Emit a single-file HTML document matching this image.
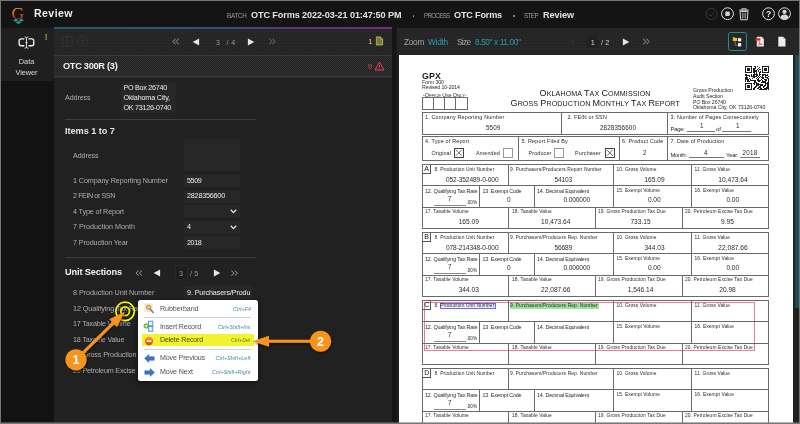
<!DOCTYPE html>
<html lang="en"><head><meta charset="utf-8"><title>Review</title>
<style>

html,body{margin:0;padding:0;background:#141414;}
body{width:800px;height:424px;overflow:hidden;font-family:"Liberation Sans",sans-serif;}
#app{position:relative;width:800px;height:424px;overflow:hidden;background:#141414;will-change:transform;}
#app div,#app span.t,#app svg{position:absolute;}
span.t{white-space:nowrap;line-height:12px;display:block;}
.grid{background-color:#242424;background-image:linear-gradient(rgba(255,255,255,.014) 1px,transparent 1px),linear-gradient(90deg,rgba(255,255,255,.014) 1px,transparent 1px);background-size:3px 3px;}
.chk{background-color:#272727;background-image:repeating-conic-gradient(#323232 0 25%,#222 0 50%);background-size:2px 2px;}
.inp{background:#272727;border-radius:2px;}

</style></head>
<body>
<div id="app">
<div style="left:0px;top:0px;width:800px;height:28px;background:#141414;"></div>
<div style="left:0px;top:28px;width:54px;height:53px;background:#1f1f1f;"></div>
<div style="left:0px;top:81px;width:54px;height:343px;background:#121212;"></div>
<div class="grid" style="left:54px;top:28px;width:338px;height:27px;"></div>
<div style="left:54px;top:27px;width:338px;height:1.6px;background:linear-gradient(90deg,#1f5d68 0%,#2c5a76 30%,#3c4e7a 50%,#543a74 68%,#6e2f7a 100%);"></div>
<div class="chk" style="left:54px;top:55px;width:338px;height:23px;"></div>
<div style="left:54px;top:55px;width:338px;height:1px;background:#3a3a3a;"></div>
<div style="left:54px;top:76.3px;width:338px;height:1px;background:#3c3c3c;"></div>
<div style="left:54px;top:78px;width:338px;height:346px;background:#212121;"></div>
<div style="left:392px;top:27px;width:4.5px;height:397px;background:#151515;"></div>
<div class="grid" style="left:396.5px;top:28px;width:403.5px;height:27px;"></div>
<div style="left:396.5px;top:55px;width:403.5px;height:369px;background:#202020;"></div>
<div style="left:399px;top:55px;width:393.5px;height:369px;background:#fff;"></div>
<div style="left:794.5px;top:55px;width:4.5px;height:253px;background:#1d4b53;"></div>
<span class="t" style="left:34.00px;top:7.00px;font-size:10.6px;color:#efefef;font-weight:700;letter-spacing:0.412px;">Review</span>
<span class="t" style="left:227.00px;top:9.50px;font-size:6.3px;color:#9a9a9a;letter-spacing:-0.277px;">BATCH</span>
<span class="t" style="left:251.00px;top:9.00px;font-size:9.1px;color:#e2e2e2;font-weight:700;letter-spacing:-0.102px;">OTC Forms 2022-03-21 01:47:50 PM</span>
<div style="left:412.7px;top:15.2px;width:1.6px;height:1.6px;background:#999;border-radius:50%"></div>
<span class="t" style="left:424.00px;top:9.50px;font-size:6.3px;color:#9a9a9a;letter-spacing:-0.758px;">PROCESS</span>
<span class="t" style="left:454.00px;top:9.00px;font-size:9.1px;color:#e2e2e2;font-weight:700;letter-spacing:-0.172px;">OTC Forms</span>
<div style="left:513.2px;top:15.2px;width:1.6px;height:1.6px;background:#999;border-radius:50%"></div>
<span class="t" style="left:524.00px;top:9.50px;font-size:6.3px;color:#9a9a9a;letter-spacing:-0.614px;">STEP</span>
<span class="t" style="left:543.00px;top:9.00px;font-size:9.1px;color:#e2e2e2;font-weight:700;letter-spacing:-0.060px;">Review</span>
<svg style="left:10px;top:4px" width="18" height="22" viewBox="0 0 18 22">
<defs><linearGradient id="lg" gradientUnits="userSpaceOnUse" x1="0" y1="3" x2="0" y2="15"><stop offset="0.1" stop-color="#f5a01c"/><stop offset="0.9" stop-color="#d8281c"/></linearGradient></defs>
<text x="1.600" y="14.700" font-family="Liberation Serif,serif" font-size="17.600" fill="url(#lg)">G</text>
<path d="M3 16.200l2.700-1.500 2.700 1.500-2.700 1.500zM8.600 16.200l2.700-1.500 2.700 1.500-2.700 1.500zM5.700 18.500l2.800-1.500 2.800 1.500-2.800 1.500z" fill="#12a79a"/>
</svg>
<svg style="left:700px;top:4px" width="96" height="20" viewBox="0 0 96 20">
<circle cx="11.5" cy="10" r="5.6" fill="none" stroke="#3a3a3a" stroke-width="0.9"/>
<path d="M8.8 10.2l2 2 3.4-4.2" fill="none" stroke="#3a3a3a" stroke-width="1"/>
<circle cx="27.5" cy="9.7" r="5.9" fill="none" stroke="#e9e1dc" stroke-width="1"/>
<rect x="25.2" y="7.4" width="4.6" height="4.6" rx="1" fill="#cfd3dc"/>
<path d="M39.2 6.2h9.6M41.8 6v-1.2h4.4V6M40 7.4h8l-.7 8.4h-6.6z" fill="none" stroke="#d8d4d2" stroke-width="1"/>
<path d="M42.4 8.6v6M44 8.6v6M45.6 8.6v6" stroke="#b9a9a9" stroke-width="0.8"/>
<circle cx="68.5" cy="9.7" r="5.9" fill="none" stroke="#e9e1dc" stroke-width="1"/>
<text x="68.5" y="12.9" text-anchor="middle" font-family="Liberation Sans,sans-serif" font-weight="700" font-size="8.6" fill="#e8e8f0">?</text>
<circle cx="84.5" cy="9.7" r="5.9" fill="none" stroke="#e9e1dc" stroke-width="1"/>
<circle cx="84.5" cy="7.9" r="2.1" fill="#d6d6d6"/>
<path d="M80.3 13.6c.6-2.6 2.3-3.2 4.2-3.2s3.600.6 4.200 3.200c-1.100 1.400-2.600 2-4.200 2s-3.100-.6-4.200-2z" fill="#d6d6d6"/>
</svg>
<svg style="left:17px;top:34.800px" width="19.500" height="15.200" viewBox="0 0 22 17">
<path d="M8.3 4.300H4.600c-1.300 0-2.200.9-2.200 2.200v3.400c0 1.300.9 2.200 2.200 2.200h3.700M13 4.300h3.700c1.300 0 2.200.9 2.200 2.200v3.400c0 1.300-.9 2.200-2.200 2.200H13" fill="none" stroke="#f2f2f2" stroke-width="1.5"/>
<path d="M8.600 2.100c1.200 0 1.900.5 2.100 1.100.2-.6.900-1.100 2.100-1.100M8.600 14.900c1.200 0 1.900-.5 2.100-1.100.2.600.9 1.100 2.100 1.100M10.700 3.200v10.600M9.500 8.500h2.400" fill="none" stroke="#f2f2f2" stroke-width="1"/>
</svg>
<span class="t" style="left:44.80px;top:31.00px;font-size:8.4px;color:#a9a61c;font-weight:700;">!</span>
<span class="t" style="left:18.75px;top:55.50px;font-size:7.4px;color:#d8d8d8;letter-spacing:-0.033px;">Data</span>
<span class="t" style="left:15.50px;top:66.50px;font-size:7.4px;color:#d8d8d8;letter-spacing:-0.081px;">Viewer</span>
<svg style="left:60px;top:34px" width="32" height="14" viewBox="0 0 32 14">
<rect x="2.500" y="2.500" width="9.500" height="9.500" fill="none" stroke="#323232" stroke-width="1"/>
<path d="M7.200 2.500v6M5 6.500l2.200 2.400 2.200-2.400" fill="none" stroke="#323232" stroke-width="1"/>
<circle cx="22.500" cy="7.200" r="5" fill="none" stroke="#323232" stroke-width="1"/>
<path d="M20.500 5.200l4 4M24.500 5.200l-4 4" stroke="#323232" stroke-width="1"/>
</svg>
<svg style="left:171.5px;top:38px" width="8" height="7" viewBox="0 0 9 8" preserveAspectRatio="none"><path d="M4 .8L1 4l3 3.200M7.600.8L4.600 4l3 3.200" fill="none" stroke="#bdbdbd" stroke-width="0.9"/></svg>
<svg style="left:192px;top:37.5px" width="8" height="8" viewBox="0 0 8 8"><path d="M7.100.600v6.800L.700 4z" fill="#e6e6e6"/></svg>
<span class="t" style="left:216.00px;top:36.50px;font-size:7.2px;color:#9a9a9a;">3</span>
<span class="t" style="left:226.50px;top:36.50px;font-size:7.2px;color:#9a9a9a;letter-spacing:0.332px;">/ 4</span>
<svg style="left:247px;top:37.5px" width="8" height="8" viewBox="0 0 8 8"><path d="M.900.600v6.800L7.300 4z" fill="#e6e6e6"/></svg>
<svg style="left:267.5px;top:38px" width="8" height="7" viewBox="0 0 9 8" preserveAspectRatio="none"><path d="M1.400.8L4.400 4l-3 3.200M5 .8L8 4 5 7.200" fill="none" stroke="#8f8f8f" stroke-width="0.9"/></svg>
<span class="t" style="left:368.30px;top:35.50px;font-size:8px;color:#e6c86e;">1</span>
<svg style="left:375.300px;top:36.300px" width="9" height="9.900" viewBox="0 0 10 11">
<path d="M1.500 1h4.600l2.400 2.400v6.600h-7z" fill="#7a7832" stroke="#c3bd72" stroke-width="0.9"/>
<path d="M6 1v2.600h2.500" fill="#5d5b26" stroke="#c3bd72" stroke-width="0.700"/>
</svg>
<span class="t" style="left:63.00px;top:60.00px;font-size:9.2px;color:#f0f0f0;font-weight:700;letter-spacing:-0.272px;">OTC 300R (3)</span>
<span class="t" style="left:367.80px;top:60.50px;font-size:8px;color:#dd3f5e;">9</span>
<svg style="left:374px;top:61px" width="11" height="10" viewBox="0 0 11 10">
<path d="M5.500 1L10 9H1z" fill="none" stroke="#e2405f" stroke-width="1"/>
<path d="M5.500 3.800v2.800M5.500 7.300v.9" stroke="#e2405f" stroke-width="0.9"/>
</svg>
<span class="t" style="left:65.00px;top:91.50px;font-size:7.2px;color:#aeaeae;letter-spacing:-0.130px;">Address</span>
<div class="inp" style="left:121px;top:82px;width:55px;height:31px;"></div>
<span class="t" style="left:123.50px;top:81.50px;font-size:7.2px;color:#ececec;letter-spacing:-0.278px;">PO Box 26740</span>
<span class="t" style="left:123.50px;top:91.50px;font-size:7.2px;color:#ececec;letter-spacing:-0.156px;">Oklahoma City,</span>
<span class="t" style="left:123.50px;top:101.50px;font-size:7.2px;color:#ececec;letter-spacing:-0.257px;">OK 73126-0740</span>
<div style="left:65px;top:119px;width:190.5px;height:1px;background:#3e3e3e;"></div>
<span class="t" style="left:65.00px;top:125.00px;font-size:9.2px;color:#e4e4e4;font-weight:700;letter-spacing:-0.052px;">Items 1 to 7</span>
<span class="t" style="left:73.00px;top:149.50px;font-size:7.2px;color:#aeaeae;letter-spacing:-0.130px;">Address</span>
<div class="inp" style="left:184px;top:139px;width:56px;height:32px;"></div>
<span class="t" style="left:73.00px;top:174.50px;font-size:7.2px;color:#aeaeae;letter-spacing:-0.102px;">1 Company Reporting Number</span>
<div class="inp" style="left:184px;top:174.0px;width:56px;height:13px;"></div>
<span class="t" style="left:187.00px;top:174.50px;font-size:7.2px;color:#ececec;letter-spacing:-0.379px;">5509</span>
<span class="t" style="left:73.00px;top:189.50px;font-size:7.2px;color:#aeaeae;letter-spacing:-0.432px;">2 FEIN or SSN</span>
<div class="inp" style="left:184px;top:189.5px;width:56px;height:13px;"></div>
<span class="t" style="left:187.00px;top:189.50px;font-size:7.2px;color:#ececec;letter-spacing:-0.204px;">2828356600</span>
<span class="t" style="left:73.00px;top:205.50px;font-size:7.2px;color:#aeaeae;letter-spacing:-0.131px;">4 Type of Report</span>
<div class="inp" style="left:184px;top:205.0px;width:56px;height:13px;"></div>
<span class="t" style="left:73.00px;top:220.50px;font-size:7.2px;color:#aeaeae;letter-spacing:-0.024px;">7 Production Month</span>
<div class="inp" style="left:184px;top:220.5px;width:56px;height:13px;"></div>
<span class="t" style="left:187.00px;top:220.50px;font-size:7.2px;color:#ececec;">4</span>
<span class="t" style="left:73.00px;top:236.50px;font-size:7.2px;color:#aeaeae;letter-spacing:-0.109px;">7 Production Year</span>
<div class="inp" style="left:184px;top:236.0px;width:56px;height:13px;"></div>
<span class="t" style="left:187.00px;top:236.50px;font-size:7.2px;color:#ececec;letter-spacing:-0.379px;">2018</span>
<svg style="left:230.2px;top:209.2px" width="7" height="5" viewBox="0 0 7 5"><path d="M.8.800l2.700 2.800L6.200.8" fill="none" stroke="#e8e8e8" stroke-width="1.300"/></svg>
<svg style="left:230.2px;top:224.7px" width="7" height="5" viewBox="0 0 7 5"><path d="M.8.800l2.700 2.800L6.200.8" fill="none" stroke="#e8e8e8" stroke-width="1.300"/></svg>
<div style="left:65px;top:257px;width:190.5px;height:1px;background:#3e3e3e;"></div>
<span class="t" style="left:65.00px;top:266.00px;font-size:9.2px;color:#f0f0f0;font-weight:700;letter-spacing:-0.137px;">Unit Sections</span>
<svg style="left:134.5px;top:269.7px" width="8.5" height="6.3" viewBox="0 0 9 8" preserveAspectRatio="none"><path d="M4 .8L1 4l3 3.200M7.600.8L4.600 4l3 3.200" fill="none" stroke="#bdbdbd" stroke-width="0.9"/></svg>
<svg style="left:153px;top:269px" width="8" height="8" viewBox="0 0 8 8"><path d="M7.100.600v6.800L.700 4z" fill="#e6e6e6"/></svg>
<div style="left:175px;top:265px;width:12.5px;height:15px;background:#1d1d1d;border:1px solid #292929;border-radius:2px;box-sizing:border-box"></div>
<span class="t" style="left:179.00px;top:267.50px;font-size:7.2px;color:#9a9a9a;">3</span>
<span class="t" style="left:190.00px;top:267.50px;font-size:7.2px;color:#9a9a9a;letter-spacing:0.165px;">/ 5</span>
<svg style="left:213px;top:269px" width="8" height="8" viewBox="0 0 8 8"><path d="M.900.600v6.800L7.300 4z" fill="#e6e6e6"/></svg>
<svg style="left:229.5px;top:269.7px" width="8.5" height="6.3" viewBox="0 0 9 8" preserveAspectRatio="none"><path d="M1.400.8L4.400 4l-3 3.200M5 .8L8 4 5 7.200" fill="none" stroke="#bdbdbd" stroke-width="0.9"/></svg>
<span class="t" style="left:73.00px;top:286.50px;font-size:7.2px;color:#aeaeae;letter-spacing:-0.056px;">8 Production Unit Number</span>
<span class="t" style="left:73.00px;top:302.50px;font-size:7.2px;color:#aeaeae;letter-spacing:-0.060px;">12 Qualifying Tax Rate</span>
<span class="t" style="left:73.00px;top:317.50px;font-size:7.2px;color:#aeaeae;letter-spacing:-0.183px;">17 Taxable Volume</span>
<span class="t" style="left:73.00px;top:333.50px;font-size:7.2px;color:#aeaeae;letter-spacing:-0.205px;">18 Taxable Value</span>
<span class="t" style="left:73.00px;top:348.50px;font-size:7.2px;color:#aeaeae;letter-spacing:-0.112px;">19 Gross Production</span>
<span class="t" style="left:73.00px;top:364.50px;font-size:7.2px;color:#aeaeae;letter-spacing:-0.186px;">20 Petroleum Excise</span>
<div class="inp" style="left:184px;top:286px;width:69px;height:13px;"></div>
<span class="t" style="left:187.00px;top:286.50px;font-size:7.2px;color:#ececec;letter-spacing:-0.112px;">9. Purchasers/Produ</span>
<span class="t" style="left:404.00px;top:36.00px;font-size:8.3px;color:#a8a8a8;letter-spacing:-0.304px;">Zoom</span>
<span class="t" style="left:428.00px;top:36.00px;font-size:8.3px;color:#2c9bb3;letter-spacing:-0.243px;">Width</span>
<span class="t" style="left:457.00px;top:36.00px;font-size:8.3px;color:#a8a8a8;letter-spacing:-0.662px;">Size</span>
<span class="t" style="left:475.00px;top:36.00px;font-size:8.3px;color:#2c9bb3;letter-spacing:-0.390px;">8.50&quot; x 11.00&quot;</span>
<svg style="left:568px;top:37.5px" width="8" height="8" viewBox="0 0 8 8"><path d="M7.100.600v6.800L.700 4z" fill="#2c2c2c"/></svg>
<div style="left:586px;top:33.5px;width:12.5px;height:15px;background:#212121;border:1px solid #262626;border-radius:2px;box-sizing:border-box"></div>
<span class="t" style="left:590.80px;top:36.50px;font-size:7.4px;color:#d0d0d0;">1</span>
<span class="t" style="left:601.00px;top:36.50px;font-size:7.4px;color:#d0d0d0;letter-spacing:0.091px;">/ 2</span>
<svg style="left:622px;top:37.5px" width="8" height="8" viewBox="0 0 8 8"><path d="M.900.600v6.800L7.300 4z" fill="#e6e6e6"/></svg>
<svg style="left:641.5px;top:38px" width="8" height="7" viewBox="0 0 9 8" preserveAspectRatio="none"><path d="M1.400.8L4.400 4l-3 3.200M5 .8L8 4 5 7.200" fill="none" stroke="#bdbdbd" stroke-width="0.9"/></svg>
<div style="left:728px;top:32px;width:18.5px;height:18.5px;border:1px solid #1f8d92;border-radius:2.500px;box-sizing:border-box"></div>
<svg style="left:731px;top:35px" width="13" height="13" viewBox="0 0 13 13">
<path d="M1.800 2.300h1.800l.6.700h2v3H1.800z" fill="#f0b93a"/>
<path d="M4.200 6v4.200h2.600M4.200 7.300" fill="none" stroke="#9a9a9a" stroke-width="0.700"/>
<rect x="7" y="3.200" width="3.200" height="3.200" fill="#f4f4f4"/>
<rect x="7" y="8" width="3.200" height="3.400" fill="#f4f4f4"/>
</svg>
<svg style="left:754px;top:35px" width="12" height="13" viewBox="0 0 12 13">
<path d="M2.800 1.800h4.800l2.200 2.200v7.400h-7z" fill="#f6f6f6"/>
<path d="M7.600 1.800v2.200h2.200z" fill="#cfcfcf"/>
<rect x="1.200" y="3.300" width="5.200" height="2.300" fill="#e3211c"/>
<path d="M4.400 10.300c1.200-1.600 1.600-3.200 1.500-3.800-.2-.8-.9.200-.1 1.600.8 1.300 2.200 1.700 2.600 1.300.4-.5-1.500-.7-4 .9z" fill="none" stroke="#e3211c" stroke-width="0.600"/>
</svg>
<svg style="left:776px;top:35px" width="12" height="13" viewBox="0 0 12 13">
<path d="M2.300 1.800h4.800l2.400 2.400v7.200h-7.200z" fill="#ededed"/>
<path d="M7.100 1.800v2.400h2.400z" fill="#bdbdbd"/>
</svg>
<span class="t" style="left:422.00px;top:70.00px;font-size:8.8px;color:#1a1a1a;font-weight:700;letter-spacing:0.139px;">GPX</span>
<span class="t" style="left:422.00px;top:76.00px;font-size:5.2px;color:#2a2a2a;letter-spacing:-0.032px;">Form 300</span>
<span class="t" style="left:422.00px;top:81.00px;font-size:5.2px;color:#2a2a2a;letter-spacing:-0.088px;">Revised 10-2014</span>
<span class="t" style="left:423.00px;top:89.00px;font-size:5.4px;color:#2a2a2a;letter-spacing:-0.058px"><span style="font-size:5.4px">-O</span><span style="font-size:4.3px">FFICE </span><span style="font-size:5.4px">U</span><span style="font-size:4.3px">SE </span><span style="font-size:5.4px">O</span><span style="font-size:4.3px">NLY</span><span style="font-size:5.4px">-</span></span>
<div style="left:421.50px;top:97.00px;width:44.00px;height:10.50px;border:1px solid #6a6a6a;"></div>
<div style="left:432.75px;top:97.5px;width:1px;height:11.5px;background:#6a6a6a;"></div>
<div style="left:444.0px;top:97.5px;width:1px;height:11.5px;background:#6a6a6a;"></div>
<div style="left:455.25px;top:97.5px;width:1px;height:11.5px;background:#6a6a6a;"></div>
<span class="t" style="left:539.50px;top:87.00px;font-size:9px;color:#161616;letter-spacing:0.128px"><span style="font-size:9px">O</span><span style="font-size:7.1px">KLAHOMA</span><span style="font-size:7.1px"> </span><span style="font-size:9px">T</span><span style="font-size:7.1px">AX</span><span style="font-size:7.1px"> </span><span style="font-size:9px">C</span><span style="font-size:7.1px">OMMISSION</span></span>
<span class="t" style="left:510.50px;top:97.00px;font-size:9px;color:#161616;letter-spacing:0.112px"><span style="font-size:9px">G</span><span style="font-size:7.1px">ROSS</span><span style="font-size:7.1px"> </span><span style="font-size:9px">P</span><span style="font-size:7.1px">RODUCTION</span><span style="font-size:7.1px"> </span><span style="font-size:9px">M</span><span style="font-size:7.1px">ONTHLY</span><span style="font-size:7.1px"> </span><span style="font-size:9px">T</span><span style="font-size:7.1px">AX</span><span style="font-size:7.1px"> </span><span style="font-size:9px">R</span><span style="font-size:7.1px">EPORT</span></span>
<span class="t" style="left:693.00px;top:84.00px;font-size:5.2px;color:#2a2a2a;letter-spacing:-0.011px;">Gross Production</span>
<span class="t" style="left:693.00px;top:90.00px;font-size:5.2px;color:#2a2a2a;letter-spacing:-0.049px;">Audit Section</span>
<span class="t" style="left:693.00px;top:96.00px;font-size:5.2px;color:#2a2a2a;letter-spacing:-0.069px;">PO Box 26740</span>
<span class="t" style="left:693.00px;top:101.00px;font-size:5.2px;color:#2a2a2a;letter-spacing:-0.029px;">Oklahoma City, OK 73126-0740</span>
<svg style="left:745px;top:66px" width="23.500" height="24" viewBox="0 0 25 25" preserveAspectRatio="none" shape-rendering="crispEdges"><path d="M0 0h7v1h-7zM10 0h2v1h-2zM13 0h1v1h-1zM18 0h7v1h-7zM0 1h1v1h-1zM6 1h1v1h-1zM11 1h1v1h-1zM15 1h1v1h-1zM18 1h1v1h-1zM24 1h1v1h-1zM0 2h1v1h-1zM2 2h3v1h-3zM6 2h1v1h-1zM9 2h3v1h-3zM14 2h1v1h-1zM18 2h1v1h-1zM20 2h3v1h-3zM24 2h1v1h-1zM0 3h1v1h-1zM2 3h3v1h-3zM6 3h1v1h-1zM8 3h3v1h-3zM13 3h1v1h-1zM15 3h2v1h-2zM18 3h1v1h-1zM20 3h3v1h-3zM24 3h1v1h-1zM0 4h1v1h-1zM2 4h3v1h-3zM6 4h1v1h-1zM8 4h5v1h-5zM14 4h1v1h-1zM18 4h1v1h-1zM20 4h3v1h-3zM24 4h1v1h-1zM0 5h1v1h-1zM6 5h1v1h-1zM9 5h4v1h-4zM14 5h1v1h-1zM16 5h1v1h-1zM18 5h1v1h-1zM24 5h1v1h-1zM0 6h7v1h-7zM8 6h3v1h-3zM12 6h1v1h-1zM15 6h2v1h-2zM18 6h7v1h-7zM8 7h1v1h-1zM10 7h1v1h-1zM12 7h1v1h-1zM15 7h1v1h-1zM0 8h2v1h-2zM6 8h1v1h-1zM8 8h6v1h-6zM15 8h2v1h-2zM18 8h4v1h-4zM23 8h1v1h-1zM0 9h5v1h-5zM6 9h1v1h-1zM8 9h3v1h-3zM12 9h2v1h-2zM15 9h1v1h-1zM18 9h2v1h-2zM21 9h3v1h-3zM1 10h1v1h-1zM4 10h1v1h-1zM6 10h7v1h-7zM14 10h1v1h-1zM16 10h1v1h-1zM18 10h1v1h-1zM21 10h1v1h-1zM24 10h1v1h-1zM0 11h3v1h-3zM9 11h2v1h-2zM13 11h1v1h-1zM15 11h1v1h-1zM17 11h3v1h-3zM21 11h3v1h-3zM3 12h3v1h-3zM8 12h1v1h-1zM10 12h1v1h-1zM15 12h1v1h-1zM19 12h6v1h-6zM0 13h3v1h-3zM4 13h1v1h-1zM7 13h2v1h-2zM12 13h1v1h-1zM14 13h1v1h-1zM18 13h2v1h-2zM23 13h2v1h-2zM0 14h4v1h-4zM5 14h1v1h-1zM8 14h1v1h-1zM13 14h2v1h-2zM17 14h1v1h-1zM20 14h3v1h-3zM24 14h1v1h-1zM0 15h1v1h-1zM2 15h2v1h-2zM5 15h3v1h-3zM9 15h3v1h-3zM13 15h4v1h-4zM18 15h1v1h-1zM21 15h2v1h-2zM24 15h1v1h-1zM0 16h1v1h-1zM2 16h3v1h-3zM8 16h1v1h-1zM10 16h2v1h-2zM14 16h2v1h-2zM18 16h4v1h-4zM24 16h1v1h-1zM8 17h1v1h-1zM10 17h3v1h-3zM17 17h5v1h-5zM23 17h2v1h-2zM0 18h7v1h-7zM9 18h2v1h-2zM12 18h3v1h-3zM21 18h4v1h-4zM0 19h1v1h-1zM6 19h1v1h-1zM10 19h1v1h-1zM12 19h7v1h-7zM21 19h1v1h-1zM23 19h2v1h-2zM0 20h1v1h-1zM2 20h3v1h-3zM6 20h1v1h-1zM12 20h3v1h-3zM16 20h3v1h-3zM20 20h2v1h-2zM23 20h2v1h-2zM0 21h1v1h-1zM2 21h3v1h-3zM6 21h1v1h-1zM11 21h2v1h-2zM15 21h2v1h-2zM19 21h2v1h-2zM23 21h2v1h-2zM0 22h1v1h-1zM2 22h3v1h-3zM6 22h1v1h-1zM8 22h1v1h-1zM10 22h2v1h-2zM14 22h3v1h-3zM19 22h1v1h-1zM22 22h3v1h-3zM0 23h1v1h-1zM6 23h1v1h-1zM8 23h3v1h-3zM13 23h2v1h-2zM16 23h2v1h-2zM20 23h5v1h-5zM0 24h7v1h-7zM8 24h3v1h-3zM15 24h8v1h-8zM24 24h1v1h-1z" fill="#1c1c1c"/></svg>
<div style="left:421.50px;top:112.00px;width:345.50px;height:20.50px;border:1px solid #6a6a6a;"></div>
<div style="left:561.0px;top:112.5px;width:1px;height:21.5px;background:#6a6a6a;"></div>
<div style="left:666.5px;top:112.5px;width:1px;height:21.5px;background:#6a6a6a;"></div>
<span class="t" style="left:425.00px;top:111.00px;font-size:5.4px;color:#2a2a2a;letter-spacing:0.176px;">1. Company Reporting Number</span>
<span class="t" style="left:486.00px;top:121.50px;font-size:6.3px;color:#2a2a2a;letter-spacing:0.121px;">5509</span>
<span class="t" style="left:567.50px;top:111.00px;font-size:5.4px;color:#2a2a2a;letter-spacing:0.164px;">2. FEIN or SSN</span>
<span class="t" style="left:600.00px;top:121.50px;font-size:6.3px;color:#2a2a2a;letter-spacing:0.096px;">2828356600</span>
<span class="t" style="left:670.50px;top:111.00px;font-size:5.4px;color:#2a2a2a;letter-spacing:0.167px;">3. Number of Pages Consecutively</span>
<span class="t" style="left:670.50px;top:123.00px;font-size:6px;color:#2a2a2a;letter-spacing:-0.336px;">Page:</span>
<div style="left:686.5px;top:131.1px;width:28.0px;height:0.8px;background:#777;"></div>
<span class="t" style="left:700.00px;top:119.50px;font-size:6.3px;color:#2a2a2a;">1</span>
<span class="t" style="left:716.00px;top:123.00px;font-size:6px;color:#2a2a2a;">of</span>
<div style="left:722px;top:131.1px;width:28.5px;height:0.8px;background:#777;"></div>
<span class="t" style="left:736.00px;top:119.50px;font-size:6.3px;color:#2a2a2a;">1</span>
<div style="left:421.50px;top:136.00px;width:345.50px;height:23.00px;border:1px solid #6a6a6a;"></div>
<div style="left:518.0px;top:136.5px;width:1px;height:24.0px;background:#6a6a6a;"></div>
<div style="left:618.5px;top:136.5px;width:1px;height:24.0px;background:#6a6a6a;"></div>
<div style="left:666.5px;top:136.5px;width:1px;height:24.0px;background:#6a6a6a;"></div>
<span class="t" style="left:425.00px;top:135.00px;font-size:5.4px;color:#2a2a2a;letter-spacing:0.187px;">4. Type of Report</span>
<span class="t" style="left:431.50px;top:147.00px;font-size:5.4px;color:#2a2a2a;letter-spacing:0.112px;">Original</span>
<div style="left:454.00px;top:148.00px;width:7.50px;height:7.50px;border:1px solid #444;"></div>
<svg style="left:455px;top:149px" width="8" height="8" viewBox="0 0 8 8"><path d="M.8.800l6 6M6.800.8l-6 6" stroke="#444" stroke-width="0.800"/></svg>
<span class="t" style="left:476.00px;top:147.00px;font-size:5.4px;color:#2a2a2a;letter-spacing:0.126px;">Amended</span>
<div style="left:503.00px;top:148.00px;width:8.00px;height:7.50px;border:1px solid #999;"></div>
<span class="t" style="left:521.50px;top:135.00px;font-size:5.4px;color:#2a2a2a;letter-spacing:0.182px;">5. Report Filed By</span>
<span class="t" style="left:528.50px;top:147.00px;font-size:5.4px;color:#2a2a2a;letter-spacing:0.136px;">Producer</span>
<div style="left:554.00px;top:148.00px;width:7.50px;height:7.50px;border:1px solid #999;"></div>
<span class="t" style="left:575.00px;top:147.00px;font-size:5.4px;color:#2a2a2a;letter-spacing:0.154px;">Purchaser</span>
<div style="left:605.00px;top:148.00px;width:7.50px;height:7.50px;border:1px solid #444;"></div>
<svg style="left:606px;top:149px" width="8" height="8" viewBox="0 0 8 8"><path d="M.8.800l6 6M6.800.8l-6 6" stroke="#444" stroke-width="0.800"/></svg>
<span class="t" style="left:622.00px;top:135.00px;font-size:5.4px;color:#2a2a2a;letter-spacing:0.165px;">6. Product Code</span>
<span class="t" style="left:643.00px;top:146.50px;font-size:6.3px;color:#2a2a2a;">2</span>
<span class="t" style="left:670.50px;top:135.00px;font-size:5.4px;color:#2a2a2a;letter-spacing:0.156px;">7. Date of Production</span>
<span class="t" style="left:670.50px;top:149.00px;font-size:6px;color:#2a2a2a;letter-spacing:-0.390px;">Month:</span>
<div style="left:688.5px;top:157.4px;width:35.5px;height:0.8px;background:#777;"></div>
<span class="t" style="left:704.00px;top:146.50px;font-size:6.3px;color:#2a2a2a;">4</span>
<span class="t" style="left:726.00px;top:149.00px;font-size:6px;color:#2a2a2a;letter-spacing:-0.258px;">Year:</span>
<div style="left:740px;top:157.4px;width:19.5px;height:0.8px;background:#777;"></div>
<span class="t" style="left:742.50px;top:146.50px;font-size:6.3px;color:#2a2a2a;letter-spacing:0.246px;">2018</span>
<div style="left:509.5px;top:302.6px;width:89px;height:6.4px;background:#9be29b;"></div>
<div style="left:440px;top:302.6px;width:56px;height:6.4px;background:#f1f1ff;border:1px solid rgba(70,70,235,.8);box-sizing:border-box"></div>
<div style="left:423.50px;top:302.00px;width:329.00px;height:46.50px;border:1px solid #e87b9c;"></div>
<div style="left:422.00px;top:164.00px;width:345.00px;height:63.00px;border:1px solid #6a6a6a;"></div>
<div style="left:422.5px;top:185.0px;width:346.0px;height:1px;background:#6a6a6a;"></div>
<div style="left:422.5px;top:206.5px;width:346.0px;height:1px;background:#6a6a6a;"></div>
<div style="left:430.0px;top:164.5px;width:1px;height:8.5px;background:#555;"></div>
<div style="left:422.5px;top:172.5px;width:8.0px;height:1px;background:#555;"></div>
<span class="t" style="left:424.37px;top:162.50px;font-size:7px;color:#111;">A</span>
<div style="left:508.0px;top:164.5px;width:1px;height:21.0px;background:#6a6a6a;"></div>
<div style="left:613.0px;top:164.5px;width:1px;height:21.0px;background:#6a6a6a;"></div>
<div style="left:691.0px;top:164.5px;width:1px;height:21.0px;background:#6a6a6a;"></div>
<div style="left:479.0px;top:185.5px;width:1px;height:21.5px;background:#6a6a6a;"></div>
<div style="left:534.0px;top:185.5px;width:1px;height:21.5px;background:#6a6a6a;"></div>
<div style="left:613.0px;top:185.5px;width:1px;height:21.5px;background:#6a6a6a;"></div>
<div style="left:691.0px;top:185.5px;width:1px;height:21.5px;background:#6a6a6a;"></div>
<div style="left:508.0px;top:207.0px;width:1px;height:21.5px;background:#6a6a6a;"></div>
<div style="left:595.0px;top:207.0px;width:1px;height:21.5px;background:#6a6a6a;"></div>
<div style="left:682.0px;top:207.0px;width:1px;height:21.5px;background:#6a6a6a;"></div>
<span class="t" style="left:434.50px;top:163.50px;font-size:4.9px;color:#2a2a2a;letter-spacing:0.090px;">8. Production Unit Number</span>
<span class="t" style="left:510.00px;top:163.50px;font-size:4.9px;color:#2a2a2a;letter-spacing:0.087px;">9. Purchasers/Producers Report Number</span>
<span class="t" style="left:616.50px;top:163.50px;font-size:4.9px;color:#2a2a2a;letter-spacing:0.066px;">10. Gross Volume</span>
<span class="t" style="left:694.50px;top:163.50px;font-size:4.9px;color:#2a2a2a;letter-spacing:0.073px;">11. Gross Value</span>
<span class="t" style="left:425.00px;top:185.00px;font-size:5.4px;color:#2a2a2a;letter-spacing:-0.141px;">12. Qualifying Tax Rate</span>
<span class="t" style="left:482.50px;top:185.00px;font-size:5.4px;color:#2a2a2a;letter-spacing:-0.182px;">13. Exempt Code</span>
<span class="t" style="left:537.00px;top:185.00px;font-size:5.4px;color:#2a2a2a;letter-spacing:-0.147px;">14. Decimal Equivalent</span>
<span class="t" style="left:616.50px;top:184.50px;font-size:4.9px;color:#2a2a2a;letter-spacing:0.059px;">15. Exempt Volume</span>
<span class="t" style="left:694.50px;top:184.50px;font-size:4.9px;color:#2a2a2a;letter-spacing:0.074px;">16. Exempt Value</span>
<span class="t" style="left:448.00px;top:192.50px;font-size:6.3px;color:#2a2a2a;">7</span>
<div style="left:434px;top:204.6px;width:32px;height:0.8px;background:#8a8a8a;"></div>
<span class="t" style="left:466.50px;top:196.50px;font-size:4.6px;color:#2a2a2a;">.00%</span>
<span class="t" style="left:425.00px;top:205.50px;font-size:4.9px;color:#2a2a2a;letter-spacing:0.073px;">17. Taxable Volume</span>
<span class="t" style="left:512.00px;top:205.50px;font-size:4.9px;color:#2a2a2a;letter-spacing:0.088px;">18. Taxable Value</span>
<span class="t" style="left:598.00px;top:205.50px;font-size:4.9px;color:#2a2a2a;letter-spacing:0.097px;">19. Gross Production Tax Due</span>
<span class="t" style="left:685.00px;top:205.50px;font-size:4.9px;color:#2a2a2a;letter-spacing:0.088px;">20. Petroleum Excise Tax Due</span>
<span class="t" style="left:446.00px;top:173.50px;font-size:6.6px;color:#2a2a2a;letter-spacing:-0.113px;">052-352489-0-000</span>
<span class="t" style="left:554.50px;top:173.50px;font-size:6.6px;color:#2a2a2a;letter-spacing:-0.171px;">54103</span>
<span class="t" style="left:644.41px;top:173.50px;font-size:6.6px;color:#2a2a2a;">165.09</span>
<span class="t" style="left:718.32px;top:173.50px;font-size:6.6px;color:#2a2a2a;">10,473.64</span>
<span class="t" style="left:507.00px;top:193.50px;font-size:6.6px;color:#2a2a2a;">0</span>
<span class="t" style="left:563.50px;top:193.50px;font-size:6.6px;color:#2a2a2a;letter-spacing:-0.129px;">0.000000</span>
<span class="t" style="left:648.00px;top:193.50px;font-size:6.6px;color:#2a2a2a;letter-spacing:-0.086px;">0.00</span>
<span class="t" style="left:726.50px;top:193.50px;font-size:6.6px;color:#2a2a2a;letter-spacing:-0.086px;">0.00</span>
<span class="t" style="left:458.71px;top:215.50px;font-size:6.6px;color:#2a2a2a;">165.09</span>
<span class="t" style="left:541.12px;top:215.50px;font-size:6.6px;color:#2a2a2a;">10,473.64</span>
<span class="t" style="left:630.41px;top:215.50px;font-size:6.6px;color:#2a2a2a;">733.15</span>
<span class="t" style="left:721.08px;top:215.50px;font-size:6.6px;color:#2a2a2a;">9.95</span>
<div style="left:422.00px;top:232.00px;width:345.00px;height:63.00px;border:1px solid #6a6a6a;"></div>
<div style="left:422.5px;top:253.0px;width:346.0px;height:1px;background:#6a6a6a;"></div>
<div style="left:422.5px;top:274.5px;width:346.0px;height:1px;background:#6a6a6a;"></div>
<div style="left:430.0px;top:232.5px;width:1px;height:8.5px;background:#555;"></div>
<div style="left:422.5px;top:240.5px;width:8.0px;height:1px;background:#555;"></div>
<span class="t" style="left:424.37px;top:230.50px;font-size:7px;color:#111;">B</span>
<div style="left:508.0px;top:232.5px;width:1px;height:21.0px;background:#6a6a6a;"></div>
<div style="left:613.0px;top:232.5px;width:1px;height:21.0px;background:#6a6a6a;"></div>
<div style="left:691.0px;top:232.5px;width:1px;height:21.0px;background:#6a6a6a;"></div>
<div style="left:479.0px;top:253.5px;width:1px;height:21.5px;background:#6a6a6a;"></div>
<div style="left:534.0px;top:253.5px;width:1px;height:21.5px;background:#6a6a6a;"></div>
<div style="left:613.0px;top:253.5px;width:1px;height:21.5px;background:#6a6a6a;"></div>
<div style="left:691.0px;top:253.5px;width:1px;height:21.5px;background:#6a6a6a;"></div>
<div style="left:508.0px;top:275.0px;width:1px;height:21.5px;background:#6a6a6a;"></div>
<div style="left:595.0px;top:275.0px;width:1px;height:21.5px;background:#6a6a6a;"></div>
<div style="left:682.0px;top:275.0px;width:1px;height:21.5px;background:#6a6a6a;"></div>
<span class="t" style="left:434.50px;top:231.50px;font-size:4.9px;color:#2a2a2a;letter-spacing:0.090px;">8. Production Unit Number</span>
<span class="t" style="left:510.00px;top:231.50px;font-size:4.9px;color:#2a2a2a;letter-spacing:0.102px;">9. Purchasers/Producers Rep. Number</span>
<span class="t" style="left:616.50px;top:231.50px;font-size:4.9px;color:#2a2a2a;letter-spacing:0.066px;">10. Gross Volume</span>
<span class="t" style="left:694.50px;top:231.50px;font-size:4.9px;color:#2a2a2a;letter-spacing:0.073px;">11. Gross Value</span>
<span class="t" style="left:425.00px;top:253.00px;font-size:5.4px;color:#2a2a2a;letter-spacing:-0.141px;">12. Qualifying Tax Rate</span>
<span class="t" style="left:482.50px;top:253.00px;font-size:5.4px;color:#2a2a2a;letter-spacing:-0.182px;">13. Exempt Code</span>
<span class="t" style="left:537.00px;top:253.00px;font-size:5.4px;color:#2a2a2a;letter-spacing:-0.147px;">14. Decimal Equivalent</span>
<span class="t" style="left:616.50px;top:252.50px;font-size:4.9px;color:#2a2a2a;letter-spacing:0.059px;">15. Exempt Volume</span>
<span class="t" style="left:694.50px;top:252.50px;font-size:4.9px;color:#2a2a2a;letter-spacing:0.074px;">16. Exempt Value</span>
<span class="t" style="left:448.00px;top:260.50px;font-size:6.3px;color:#2a2a2a;">7</span>
<div style="left:434px;top:272.6px;width:32px;height:0.8px;background:#8a8a8a;"></div>
<span class="t" style="left:466.50px;top:264.50px;font-size:4.6px;color:#2a2a2a;">.00%</span>
<span class="t" style="left:425.00px;top:273.50px;font-size:4.9px;color:#2a2a2a;letter-spacing:0.073px;">17. Taxable Volume</span>
<span class="t" style="left:512.00px;top:273.50px;font-size:4.9px;color:#2a2a2a;letter-spacing:0.088px;">18. Taxable Value</span>
<span class="t" style="left:598.00px;top:273.50px;font-size:4.9px;color:#2a2a2a;letter-spacing:0.097px;">19. Gross Production Tax Due</span>
<span class="t" style="left:685.00px;top:273.50px;font-size:4.9px;color:#2a2a2a;letter-spacing:0.088px;">20. Petroleum Excise Tax Due</span>
<span class="t" style="left:446.00px;top:241.50px;font-size:6.6px;color:#2a2a2a;letter-spacing:-0.113px;">078-214348-0-000</span>
<span class="t" style="left:554.50px;top:241.50px;font-size:6.6px;color:#2a2a2a;letter-spacing:-0.171px;">56689</span>
<span class="t" style="left:644.41px;top:241.50px;font-size:6.6px;color:#2a2a2a;">344.03</span>
<span class="t" style="left:718.32px;top:241.50px;font-size:6.6px;color:#2a2a2a;">22,087.66</span>
<span class="t" style="left:507.00px;top:261.50px;font-size:6.6px;color:#2a2a2a;">0</span>
<span class="t" style="left:563.50px;top:261.50px;font-size:6.6px;color:#2a2a2a;letter-spacing:-0.129px;">0.000000</span>
<span class="t" style="left:648.00px;top:261.50px;font-size:6.6px;color:#2a2a2a;letter-spacing:-0.086px;">0.00</span>
<span class="t" style="left:726.50px;top:261.50px;font-size:6.6px;color:#2a2a2a;letter-spacing:-0.086px;">0.00</span>
<span class="t" style="left:458.71px;top:283.50px;font-size:6.6px;color:#2a2a2a;">344.03</span>
<span class="t" style="left:541.12px;top:283.50px;font-size:6.6px;color:#2a2a2a;">22,087.66</span>
<span class="t" style="left:627.65px;top:283.50px;font-size:6.6px;color:#2a2a2a;">1,546.14</span>
<span class="t" style="left:719.24px;top:283.50px;font-size:6.6px;color:#2a2a2a;">20.98</span>
<div style="left:422.00px;top:300.00px;width:345.00px;height:63.00px;border:1px solid #6a6a6a;"></div>
<div style="left:422.5px;top:321.0px;width:346.0px;height:1px;background:#6a6a6a;"></div>
<div style="left:422.5px;top:342.5px;width:346.0px;height:1px;background:#6a6a6a;"></div>
<div style="left:430.0px;top:300.5px;width:1px;height:8.5px;background:#555;"></div>
<div style="left:422.5px;top:308.5px;width:8.0px;height:1px;background:#555;"></div>
<span class="t" style="left:424.17px;top:298.50px;font-size:7px;color:#111;">C</span>
<div style="left:508.0px;top:300.5px;width:1px;height:21.0px;background:#6a6a6a;"></div>
<div style="left:613.0px;top:300.5px;width:1px;height:21.0px;background:#6a6a6a;"></div>
<div style="left:691.0px;top:300.5px;width:1px;height:21.0px;background:#6a6a6a;"></div>
<div style="left:479.0px;top:321.5px;width:1px;height:21.5px;background:#6a6a6a;"></div>
<div style="left:534.0px;top:321.5px;width:1px;height:21.5px;background:#6a6a6a;"></div>
<div style="left:613.0px;top:321.5px;width:1px;height:21.5px;background:#6a6a6a;"></div>
<div style="left:691.0px;top:321.5px;width:1px;height:21.5px;background:#6a6a6a;"></div>
<div style="left:508.0px;top:343.0px;width:1px;height:21.5px;background:#6a6a6a;"></div>
<div style="left:595.0px;top:343.0px;width:1px;height:21.5px;background:#6a6a6a;"></div>
<div style="left:682.0px;top:343.0px;width:1px;height:21.5px;background:#6a6a6a;"></div>
<span class="t" style="left:434.50px;top:299.50px;font-size:4.9px;color:#2a2a2a;letter-spacing:0.090px;">8. Production Unit Number</span>
<span class="t" style="left:510.00px;top:299.50px;font-size:4.9px;color:#2a2a2a;letter-spacing:0.102px;">9. Purchasers/Producers Rep. Number</span>
<span class="t" style="left:616.50px;top:299.50px;font-size:4.9px;color:#2a2a2a;letter-spacing:0.066px;">10. Gross Volume</span>
<span class="t" style="left:694.50px;top:299.50px;font-size:4.9px;color:#2a2a2a;letter-spacing:0.073px;">11. Gross Value</span>
<span class="t" style="left:425.00px;top:321.00px;font-size:5.4px;color:#2a2a2a;letter-spacing:-0.141px;">12. Qualifying Tax Rate</span>
<span class="t" style="left:482.50px;top:321.00px;font-size:5.4px;color:#2a2a2a;letter-spacing:-0.182px;">13. Exempt Code</span>
<span class="t" style="left:537.00px;top:321.00px;font-size:5.4px;color:#2a2a2a;letter-spacing:-0.147px;">14. Decimal Equivalent</span>
<span class="t" style="left:616.50px;top:320.50px;font-size:4.9px;color:#2a2a2a;letter-spacing:0.059px;">15. Exempt Volume</span>
<span class="t" style="left:694.50px;top:320.50px;font-size:4.9px;color:#2a2a2a;letter-spacing:0.074px;">16. Exempt Value</span>
<span class="t" style="left:448.00px;top:328.50px;font-size:6.3px;color:#2a2a2a;">7</span>
<div style="left:434px;top:340.6px;width:32px;height:0.8px;background:#8a8a8a;"></div>
<span class="t" style="left:466.50px;top:332.50px;font-size:4.6px;color:#2a2a2a;">.00%</span>
<span class="t" style="left:425.00px;top:341.50px;font-size:4.9px;color:#2a2a2a;letter-spacing:0.073px;">17. Taxable Volume</span>
<span class="t" style="left:512.00px;top:341.50px;font-size:4.9px;color:#2a2a2a;letter-spacing:0.088px;">18. Taxable Value</span>
<span class="t" style="left:598.00px;top:341.50px;font-size:4.9px;color:#2a2a2a;letter-spacing:0.097px;">19. Gross Production Tax Due</span>
<span class="t" style="left:685.00px;top:341.50px;font-size:4.9px;color:#2a2a2a;letter-spacing:0.088px;">20. Petroleum Excise Tax Due</span>
<div style="left:422.00px;top:368.00px;width:345.00px;height:63.00px;border:1px solid #6a6a6a;"></div>
<div style="left:422.5px;top:389.0px;width:346.0px;height:1px;background:#6a6a6a;"></div>
<div style="left:422.5px;top:410.5px;width:346.0px;height:1px;background:#6a6a6a;"></div>
<div style="left:430.0px;top:368.5px;width:1px;height:8.5px;background:#555;"></div>
<div style="left:422.5px;top:376.5px;width:8.0px;height:1px;background:#555;"></div>
<span class="t" style="left:424.17px;top:366.50px;font-size:7px;color:#111;">D</span>
<div style="left:508.0px;top:368.5px;width:1px;height:21.0px;background:#6a6a6a;"></div>
<div style="left:613.0px;top:368.5px;width:1px;height:21.0px;background:#6a6a6a;"></div>
<div style="left:691.0px;top:368.5px;width:1px;height:21.0px;background:#6a6a6a;"></div>
<div style="left:479.0px;top:389.5px;width:1px;height:21.5px;background:#6a6a6a;"></div>
<div style="left:534.0px;top:389.5px;width:1px;height:21.5px;background:#6a6a6a;"></div>
<div style="left:613.0px;top:389.5px;width:1px;height:21.5px;background:#6a6a6a;"></div>
<div style="left:691.0px;top:389.5px;width:1px;height:21.5px;background:#6a6a6a;"></div>
<div style="left:508.0px;top:411.0px;width:1px;height:21.5px;background:#6a6a6a;"></div>
<div style="left:595.0px;top:411.0px;width:1px;height:21.5px;background:#6a6a6a;"></div>
<div style="left:682.0px;top:411.0px;width:1px;height:21.5px;background:#6a6a6a;"></div>
<span class="t" style="left:434.50px;top:367.50px;font-size:4.9px;color:#2a2a2a;letter-spacing:0.090px;">8. Production Unit Number</span>
<span class="t" style="left:510.00px;top:367.50px;font-size:4.9px;color:#2a2a2a;letter-spacing:0.102px;">9. Purchasers/Producers Rep. Number</span>
<span class="t" style="left:616.50px;top:367.50px;font-size:4.9px;color:#2a2a2a;letter-spacing:0.066px;">10. Gross Volume</span>
<span class="t" style="left:694.50px;top:367.50px;font-size:4.9px;color:#2a2a2a;letter-spacing:0.073px;">11. Gross Value</span>
<span class="t" style="left:425.00px;top:389.00px;font-size:5.4px;color:#2a2a2a;letter-spacing:-0.141px;">12. Qualifying Tax Rate</span>
<span class="t" style="left:482.50px;top:389.00px;font-size:5.4px;color:#2a2a2a;letter-spacing:-0.182px;">13. Exempt Code</span>
<span class="t" style="left:537.00px;top:389.00px;font-size:5.4px;color:#2a2a2a;letter-spacing:-0.147px;">14. Decimal Equivalent</span>
<span class="t" style="left:616.50px;top:388.50px;font-size:4.9px;color:#2a2a2a;letter-spacing:0.059px;">15. Exempt Volume</span>
<span class="t" style="left:694.50px;top:388.50px;font-size:4.9px;color:#2a2a2a;letter-spacing:0.074px;">16. Exempt Value</span>
<span class="t" style="left:448.00px;top:396.50px;font-size:6.3px;color:#2a2a2a;">7</span>
<div style="left:434px;top:408.6px;width:32px;height:0.8px;background:#8a8a8a;"></div>
<span class="t" style="left:466.50px;top:400.50px;font-size:4.6px;color:#2a2a2a;">.00%</span>
<span class="t" style="left:425.00px;top:409.50px;font-size:4.9px;color:#2a2a2a;letter-spacing:0.073px;">17. Taxable Volume</span>
<span class="t" style="left:512.00px;top:409.50px;font-size:4.9px;color:#2a2a2a;letter-spacing:0.088px;">18. Taxable Value</span>
<span class="t" style="left:598.00px;top:409.50px;font-size:4.9px;color:#2a2a2a;letter-spacing:0.097px;">19. Gross Production Tax Due</span>
<span class="t" style="left:685.00px;top:409.50px;font-size:4.9px;color:#2a2a2a;letter-spacing:0.088px;">20. Petroleum Excise Tax Due</span>
<div style="left:138px;top:299.5px;width:119.5px;height:81px;background:#fff;border-radius:2.500px;box-shadow:0 1px 4px rgba(0,0,0,.5)"></div>
<div style="left:142px;top:334.3px;width:111.5px;height:11.8px;background:#f2f230;"></div>
<div style="left:144px;top:317.0px;width:107px;height:1px;background:#d4d4d4;"></div>
<div style="left:144px;top:348.5px;width:107px;height:1px;background:#d4d4d4;"></div>
<span class="t" style="left:160.00px;top:303.00px;font-size:7.1px;color:#505050;letter-spacing:-0.058px;">Rubberband</span>
<span class="t" style="left:160.00px;top:321.00px;font-size:7.1px;color:#505050;letter-spacing:-0.124px;">Insert Record</span>
<span class="t" style="left:160.00px;top:334.00px;font-size:7.1px;color:#4c4a10;letter-spacing:-0.183px;">Delete Record</span>
<span class="t" style="left:160.00px;top:352.00px;font-size:7.1px;color:#505050;letter-spacing:-0.151px;">Move Previous</span>
<span class="t" style="left:160.00px;top:366.00px;font-size:7.1px;color:#505050;letter-spacing:-0.104px;">Move Next</span>
<span class="t" style="left:233.00px;top:303.00px;font-size:5.3px;color:#3d8aa3;font-style:italic;letter-spacing:0.068px;">Ctrl+F4</span>
<span class="t" style="left:218.00px;top:321.00px;font-size:5.3px;color:#3d8aa3;font-style:italic;letter-spacing:0.028px;">Ctrl+Shift+Ins</span>
<span class="t" style="left:231.00px;top:334.00px;font-size:5.3px;color:#5f8a1a;font-style:italic;letter-spacing:-0.036px;">Ctrl+Del</span>
<span class="t" style="left:215.50px;top:352.00px;font-size:5.3px;color:#3d8aa3;font-style:italic;letter-spacing:0.075px;">Ctrl+Shift+Left</span>
<span class="t" style="left:212.00px;top:366.00px;font-size:5.3px;color:#3d8aa3;font-style:italic;letter-spacing:0.068px;">Ctrl+Shift+Right</span>
<svg style="left:144px;top:303px" width="11" height="11" viewBox="0 0 11 11">
<rect x="1" y="1" width="7" height="7.500" fill="#f3f3f3" stroke="#cfcfcf" stroke-width="0.600"/>
<circle cx="4.600" cy="4.400" r="2.300" fill="#f6c64a" stroke="#b8892b" stroke-width="0.800"/>
<path d="M6.300 6.200l3 3.200" stroke="#777" stroke-width="1.400" stroke-linecap="round"/>
</svg>
<svg style="left:143px;top:320px" width="12" height="12" viewBox="0 0 12 12">
<rect x="5.600" y="1.200" width="4.200" height="4.600" fill="#e9f3fb" stroke="#3d8fd0" stroke-width="0.900"/>
<rect x="5.600" y="6.600" width="4.200" height="4.600" fill="#e9f3fb" stroke="#3d8fd0" stroke-width="0.900"/>
<circle cx="3.200" cy="6" r="2.300" fill="#7fc241" stroke="#4f9a1e" stroke-width="0.600"/>
<path d="M2 6h2.400M3.200 4.800v2.400" stroke="#fff" stroke-width="0.800"/>
</svg>
<svg style="left:144px;top:335.500px" width="10" height="10" viewBox="0 0 10 10">
<defs><linearGradient id="dg" x1="0" y1="0" x2="0" y2="1"><stop offset="0" stop-color="#f8a03a"/><stop offset="1" stop-color="#e23a12"/></linearGradient></defs>
<circle cx="5" cy="5" r="4.200" fill="url(#dg)"/>
<rect x="2.600" y="4.200" width="4.800" height="1.700" rx=".4" fill="#fff4e6"/>
</svg>
<svg style="left:143.500px;top:353.500px" width="11" height="9" viewBox="0 0 11 9">
<path d="M.6 4.400L4.800.6v2.200h5.400v3.400H4.800v2.200z" fill="#3a78c2" stroke="#2a5a9a" stroke-width="0.500"/>
</svg>
<svg style="left:143.500px;top:367.500px" width="11" height="9" viewBox="0 0 11 9">
<path d="M10.400 4.400L6.200.6v2.200H.8v3.400h5.400v2.200z" fill="#3a78c2" stroke="#2a5a9a" stroke-width="0.500"/>
</svg>
<svg style="left:50px;top:290px" width="300" height="100" viewBox="50 290 300 100">
<defs><filter id="sh" x="-20%" y="-20%" width="150%" height="150%"><feDropShadow dx="1" dy="1.500" stdDeviation="1.200" flood-color="#000" flood-opacity=".55"/></filter></defs>
<circle cx="125.100" cy="311.300" r="9.250" fill="none" stroke="#f3f30a" stroke-width="1.700"/>
<circle cx="125.100" cy="311.300" r="4.350" fill="none" stroke="#f3f30a" stroke-width="1.700"/>
<g filter="url(#sh)" fill="#f7941d" stroke="none">
<path d="M125.0 311.5L117.0 327.1L114.2 324.2L77.1 360.8L74.9 358.7L112.1 322.1L109.3 319.2z"/>
<circle cx="76" cy="359.750" r="10.600"/>
<path d="M252.300 341.200L269 335.700V339.700H312V342.700H269V346.700z"/>
<circle cx="320.600" cy="341.250" r="10.600"/>
</g>
<text x="76" y="364" text-anchor="middle" font-family="Liberation Sans,sans-serif" font-weight="700" font-size="12.500" fill="#fff">1</text>
<text x="320.600" y="345.600" text-anchor="middle" font-family="Liberation Sans,sans-serif" font-weight="700" font-size="12.500" fill="#fff">2</text>
</svg>
<div style="left:0;top:0;width:798px;height:422px;border:1px solid #767676;"></div>
<div style="left:1px;top:422px;width:798px;height:1px;background:rgba(118,118,118,.55);"></div>
</div>
</body></html>
